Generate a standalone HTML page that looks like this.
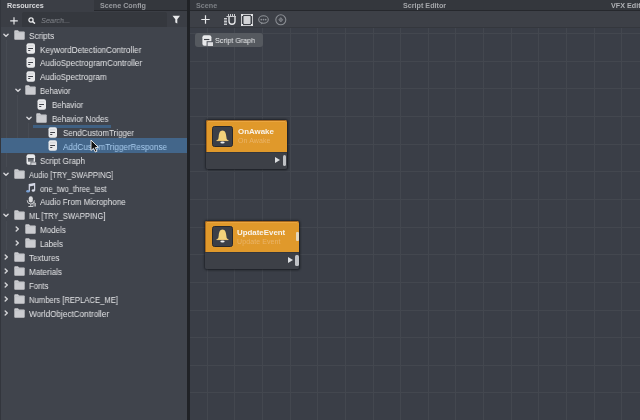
<!DOCTYPE html>
<html><head><meta charset="utf-8"><style>
*{margin:0;padding:0;box-sizing:border-box}
html,body{width:640px;height:420px;overflow:hidden;background:#40444c;font-family:"Liberation Sans",sans-serif}
#left{position:absolute;left:0;top:0;width:187px;height:420px;background:#40444c}
.tabbar{position:absolute;top:0;height:10.5px;background:#34373d;border-bottom:1px solid #26282d}
.tab{position:absolute;top:1.6px;height:10px;font-size:7.2px;font-weight:bold;line-height:8px;color:#8e9096;white-space:nowrap;will-change:transform}
.ic{position:absolute}
.lbl{position:absolute;font-size:8.6px;line-height:11px;color:#e4e5e7;white-space:nowrap;transform-origin:0 50%;will-change:transform}
.lbl.sl{color:#a9cdf0}
.guide{position:absolute;width:1px;background:#474b53}
.sel{position:absolute;left:0;width:187px;height:15px;background:#43668a}
.drop{position:absolute;width:78px;height:2.7px;background:#3f6082}
#sep{position:absolute;left:187px;top:0;width:3px;height:420px;background:#202226}
#right{position:absolute;left:190px;top:0;width:450px;height:420px;background:#3a3e47;overflow:hidden}
#graph{position:absolute;left:0;top:27.5px;width:450px;height:393px;background:#3a3e47;overflow:hidden}
.gv{position:absolute;top:0;width:1px;height:393px;background:#43474f}
.gh{position:absolute;left:0;height:1px;width:450px;background:#43474f}
.crumb{position:absolute;left:5px;top:5.6px;width:67.5px;height:14.2px;background:#55595f;border-radius:3px}
.node{position:absolute;box-shadow:0 0 2px 1px rgba(20,22,26,0.6), 1px 1px 2px rgba(20,22,26,0.4);border-radius:2px}
.nh{position:relative;background:#e0992b;border-radius:2.5px 2.5px 0 0;box-shadow:inset 0 1px 0 #a5671c, inset 1px 0 0 #a5671c, inset 0 2px 0 #eba640}
.nb{position:relative;background:#3d4047;border-radius:0 0 2px 2px;border-top:1px solid #34373d}
.nicon{position:absolute;left:6.2px;top:6.2px;width:21.4px;height:21px;background:#3b3f48;border:1.2px solid #26282d;border-radius:2.5px;display:flex;align-items:center;justify-content:center}
.nt{position:absolute;left:32px;top:7px;font-size:7.9px;font-weight:bold;color:#f8f3ea;white-space:nowrap;will-change:transform}
.ns{position:absolute;left:32px;top:17.2px;font-size:7px;color:#eab468;white-space:nowrap;letter-spacing:0.1px;will-change:transform}
.tri{position:absolute;right:6.5px;top:4.4px;width:0;height:0;border-left:5.5px solid #dcdde0;border-top:3.5px solid transparent;border-bottom:3.5px solid transparent}
.bar{position:absolute;right:0.6px;top:2.2px;width:3.6px;height:11px;background:#bfc1c5;border-radius:1.5px}
</style></head><body>
<div id="left">
 <div class="tabbar" style="left:0;width:187px"></div>
 <div style="position:absolute;left:0;top:0;width:1px;height:420px;background:#33363d;z-index:5"></div>
 <div style="position:absolute;left:0;top:0;width:93.8px;height:11.5px;background:#3b3e45"></div>
 <div class="tab" style="left:7px;top:2px;color:#d9dadd">Resources</div>
 <div class="tab" style="left:100px;color:#9a9ca1">Scene Config</div>
 <div style="position:absolute;left:0;top:10.5px;width:187px;height:16.5px;background:#3b3e45"></div>
 <div style="position:absolute;left:22px;top:12px;width:145px;height:15px;background:#35383e;border-radius:2px 2px 0 0"></div>
 <svg class="ic" style="left:9.5px;top:16.6px" width="9" height="9" viewBox="0 0 9 9"><path d="M4 0.2 V7.4 M0.2 3.8 H7.8" stroke="#e8e9eb" stroke-width="1.15"/></svg>
 <svg class="ic" style="left:28px;top:16.5px" width="8" height="7" viewBox="0 0 8 7"><circle cx="3" cy="3" r="2.1" fill="none" stroke="#e8e9eb" stroke-width="1.3"/><path d="M4.6 4.6 L7 6.6" stroke="#e8e9eb" stroke-width="1.4"/></svg>
 <div class="lbl" style="left:41px;top:14.5px;color:#85888e;font-style:italic;font-size:7.4px;transform:scaleX(0.98);transform-origin:0 50%;will-change:transform">Search...</div>
 <svg class="ic" style="left:172px;top:14.5px" width="9" height="9" viewBox="0 0 9 9"><path d="M0.5 0.8 H8 L5.3 4.3 V8.5 L3.3 7.5 V4.3 Z" fill="#e8e9eb"/></svg>
<div class="guide" style="left:6px;top:39.8px;height:127.1px"></div>
<div class="guide" style="left:17px;top:95.4px;height:57.6px"></div>
<div class="guide" style="left:28px;top:123.2px;height:29.8px"></div>
<div class="guide" style="left:6px;top:178.8px;height:29.8px"></div>
<div class="guide" style="left:6px;top:220.5px;height:29.8px"></div>
<svg class="ic" style="left:3.4px;top:32.599999999999994px" width="6" height="5" viewBox="0 0 6 5"><path d="M0.9 1.2 L3 3.3 L5.1 1.2" fill="none" stroke="#d4d5d8" stroke-width="1.4" stroke-linecap="round" stroke-linejoin="round"/></svg>
<svg class="ic" style="left:14px;top:30px" width="11" height="10" viewBox="0 0 11 10"><path d="M0.3 1.1 Q0.3 0.3 1.1 0.3 H4 L5 1.4 H9.9 Q10.7 1.4 10.7 2.2 V9 Q10.7 9.7 9.9 9.7 H1.1 Q0.3 9.7 0.3 9 Z" fill="#cbccd0"/><path d="M0.3 2.6 H10.7" stroke="#b9babe" stroke-width="0.5"/></svg>
<div class="lbl" style="left:29.3px;top:30.60px;transform:scaleX(0.9610)">Scripts</div>
<svg class="ic" style="left:26.1px;top:43px" width="10" height="11" viewBox="0 0 10 11"><rect x="0.5" y="0.3" width="8.5" height="10.5" rx="2" fill="#e8e9eb"/><path d="M2 2.8 H7.5" stroke="#c9cace" stroke-width="0.7"/><path d="M2.2 5.5 H7 M2.2 7.5 H4.3" stroke="#3f4249" stroke-width="1"/></svg>
<div class="lbl" style="left:40.4px;top:44.50px;transform:scaleX(0.9467)">KeywordDetectionController</div>
<svg class="ic" style="left:26.1px;top:57px" width="10" height="11" viewBox="0 0 10 11"><rect x="0.5" y="0.3" width="8.5" height="10.5" rx="2" fill="#e8e9eb"/><path d="M2 2.8 H7.5" stroke="#c9cace" stroke-width="0.7"/><path d="M2.2 5.5 H7 M2.2 7.5 H4.3" stroke="#3f4249" stroke-width="1"/></svg>
<div class="lbl" style="left:40.4px;top:58.40px;transform:scaleX(0.9411)">AudioSpectrogramController</div>
<svg class="ic" style="left:26.1px;top:71px" width="10" height="11" viewBox="0 0 10 11"><rect x="0.5" y="0.3" width="8.5" height="10.5" rx="2" fill="#e8e9eb"/><path d="M2 2.8 H7.5" stroke="#c9cace" stroke-width="0.7"/><path d="M2.2 5.5 H7 M2.2 7.5 H4.3" stroke="#3f4249" stroke-width="1"/></svg>
<div class="lbl" style="left:40.4px;top:72.30px;transform:scaleX(0.9357)">AudioSpectrogram</div>
<svg class="ic" style="left:14.5px;top:88.2px" width="6" height="5" viewBox="0 0 6 5"><path d="M0.9 1.2 L3 3.3 L5.1 1.2" fill="none" stroke="#d4d5d8" stroke-width="1.4" stroke-linecap="round" stroke-linejoin="round"/></svg>
<svg class="ic" style="left:25px;top:85px" width="11" height="10" viewBox="0 0 11 10"><path d="M0.3 1.1 Q0.3 0.3 1.1 0.3 H4 L5 1.4 H9.9 Q10.7 1.4 10.7 2.2 V9 Q10.7 9.7 9.9 9.7 H1.1 Q0.3 9.7 0.3 9 Z" fill="#cbccd0"/><path d="M0.3 2.6 H10.7" stroke="#b9babe" stroke-width="0.5"/></svg>
<div class="lbl" style="left:40.4px;top:86.20px;transform:scaleX(0.8982)">Behavior</div>
<svg class="ic" style="left:37.2px;top:99px" width="10" height="11" viewBox="0 0 10 11"><rect x="0.5" y="0.3" width="8.5" height="10.5" rx="2" fill="#e8e9eb"/><path d="M2 2.8 H7.5" stroke="#c9cace" stroke-width="0.7"/><path d="M2.2 5.5 H7 M2.2 7.5 H4.3" stroke="#3f4249" stroke-width="1"/></svg>
<div class="lbl" style="left:51.5px;top:100.10px;transform:scaleX(0.9190)">Behavior</div>
<svg class="ic" style="left:25.599999999999998px;top:116.0px" width="6" height="5" viewBox="0 0 6 5"><path d="M0.9 1.2 L3 3.3 L5.1 1.2" fill="none" stroke="#d4d5d8" stroke-width="1.4" stroke-linecap="round" stroke-linejoin="round"/></svg>
<svg class="ic" style="left:36px;top:113px" width="11" height="10" viewBox="0 0 11 10"><path d="M0.3 1.1 Q0.3 0.3 1.1 0.3 H4 L5 1.4 H9.9 Q10.7 1.4 10.7 2.2 V9 Q10.7 9.7 9.9 9.7 H1.1 Q0.3 9.7 0.3 9 Z" fill="#cbccd0"/><path d="M0.3 2.6 H10.7" stroke="#b9babe" stroke-width="0.5"/></svg>
<div class="lbl" style="left:51.5px;top:114.00px;transform:scaleX(0.9235)">Behavior Nodes</div>
<div class="drop" style="top:125.20px;left:32.8px"></div>
<svg class="ic" style="left:48.3px;top:127px" width="10" height="11" viewBox="0 0 10 11"><rect x="0.5" y="0.3" width="8.5" height="10.5" rx="2" fill="#e8e9eb"/><path d="M2 2.8 H7.5" stroke="#c9cace" stroke-width="0.7"/><path d="M2.2 5.5 H7 M2.2 7.5 H4.3" stroke="#3f4249" stroke-width="1"/></svg>
<div class="lbl" style="left:62.599999999999994px;top:127.90px;transform:scaleX(0.9274)">SendCustomTrigger</div>
<div class="sel" style="top:138.00px"></div>
<svg class="ic" style="left:48.3px;top:140px" width="10" height="11" viewBox="0 0 10 11"><rect x="0.5" y="0.3" width="8.5" height="10.5" rx="2" fill="#e8e9eb"/><path d="M2 2.8 H7.5" stroke="#c9cace" stroke-width="0.7"/><path d="M2.2 5.5 H7 M2.2 7.5 H4.3" stroke="#3f4249" stroke-width="1"/></svg>
<div class="lbl sl" style="left:62.599999999999994px;top:141.80px;transform:scaleX(0.9409)">AddCustomTriggerResponse</div>
<svg class="ic" style="left:26.1px;top:154px" width="11" height="11" viewBox="0 0 11 11"><rect x="0.5" y="0.3" width="8.6" height="10.5" rx="2" fill="#e8e9eb"/><rect x="2" y="4.4" width="5.6" height="3.3" fill="#6c6f75"/><rect x="1.8" y="4.2" width="6" height="1" fill="#3f4249"/><rect x="4.6" y="7.8" width="6" height="3.2" fill="#40444c"/><rect x="5.2" y="8.3" width="5" height="2.7" fill="#c7c8cc"/></svg>
<div class="lbl" style="left:40.4px;top:155.70px;transform:scaleX(0.9301)">Script Graph</div>
<svg class="ic" style="left:3.4px;top:171.60000000000002px" width="6" height="5" viewBox="0 0 6 5"><path d="M0.9 1.2 L3 3.3 L5.1 1.2" fill="none" stroke="#d4d5d8" stroke-width="1.4" stroke-linecap="round" stroke-linejoin="round"/></svg>
<svg class="ic" style="left:14px;top:169px" width="11" height="10" viewBox="0 0 11 10"><path d="M0.3 1.1 Q0.3 0.3 1.1 0.3 H4 L5 1.4 H9.9 Q10.7 1.4 10.7 2.2 V9 Q10.7 9.7 9.9 9.7 H1.1 Q0.3 9.7 0.3 9 Z" fill="#cbccd0"/><path d="M0.3 2.6 H10.7" stroke="#b9babe" stroke-width="0.5"/></svg>
<div class="lbl" style="left:29.3px;top:169.60px;transform:scaleX(0.8701)">Audio [TRY_SWAPPING]</div>
<svg class="ic" style="left:26.299999999999997px;top:183.39999999999998px" width="10" height="10" viewBox="0 0 10 10"><path d="M3.3 8.2 V1.6 L8.6 0.6 V7.4" fill="none" stroke="#d6d9e6" stroke-width="1.2"/><path d="M3.3 1.6 L8.6 0.6 V2.6 L3.3 3.6 Z" fill="#d6d9e6"/><ellipse cx="2" cy="8.3" rx="1.8" ry="1.3" fill="#7aa2d6"/><ellipse cx="7.3" cy="7.5" rx="1.6" ry="1.3" fill="#d6d9e6"/></svg>
<div class="lbl" style="left:40.4px;top:183.50px;transform:scaleX(0.8823)">one_two_three_test</div>
<svg class="ic" style="left:26.1px;top:196.3px" width="10" height="11" viewBox="0 0 10 11"><rect x="2.8" y="0.3" width="4" height="6.2" rx="2" fill="#dadbde"/><path d="M1.2 4.3 Q1.2 8 4.8 8 Q8.4 8 8.4 4.3 M4.8 8 V10.5 M2.4 10.5 H7.2" fill="none" stroke="#dadbde" stroke-width="0.9"/><path d="M7 6.5 V10.5 M8.3 5.8 V10.5 M9.5 7 V10.5" stroke="#c5c6ca" stroke-width="0.8"/></svg>
<div class="lbl" style="left:40.4px;top:197.40px;transform:scaleX(0.9344)">Audio From Microphone</div>
<svg class="ic" style="left:3.4px;top:213.3px" width="6" height="5" viewBox="0 0 6 5"><path d="M0.9 1.2 L3 3.3 L5.1 1.2" fill="none" stroke="#d4d5d8" stroke-width="1.4" stroke-linecap="round" stroke-linejoin="round"/></svg>
<svg class="ic" style="left:14px;top:210px" width="11" height="10" viewBox="0 0 11 10"><path d="M0.3 1.1 Q0.3 0.3 1.1 0.3 H4 L5 1.4 H9.9 Q10.7 1.4 10.7 2.2 V9 Q10.7 9.7 9.9 9.7 H1.1 Q0.3 9.7 0.3 9 Z" fill="#cbccd0"/><path d="M0.3 2.6 H10.7" stroke="#b9babe" stroke-width="0.5"/></svg>
<div class="lbl" style="left:29.3px;top:211.30px;transform:scaleX(0.8835)">ML [TRY_SWAPPING]</div>
<svg class="ic" style="left:15.3px;top:226.09999999999997px" width="5" height="6" viewBox="0 0 5 6"><path d="M1.2 0.9 L3.3 3 L1.2 5.1" fill="none" stroke="#d4d5d8" stroke-width="1.4" stroke-linecap="round" stroke-linejoin="round"/></svg>
<svg class="ic" style="left:25px;top:224px" width="11" height="10" viewBox="0 0 11 10"><path d="M0.3 1.1 Q0.3 0.3 1.1 0.3 H4 L5 1.4 H9.9 Q10.7 1.4 10.7 2.2 V9 Q10.7 9.7 9.9 9.7 H1.1 Q0.3 9.7 0.3 9 Z" fill="#cbccd0"/><path d="M0.3 2.6 H10.7" stroke="#b9babe" stroke-width="0.5"/></svg>
<div class="lbl" style="left:40.4px;top:225.20px;transform:scaleX(0.9300)">Models</div>
<svg class="ic" style="left:15.3px;top:240.0px" width="5" height="6" viewBox="0 0 5 6"><path d="M1.2 0.9 L3.3 3 L1.2 5.1" fill="none" stroke="#d4d5d8" stroke-width="1.4" stroke-linecap="round" stroke-linejoin="round"/></svg>
<svg class="ic" style="left:25px;top:238px" width="11" height="10" viewBox="0 0 11 10"><path d="M0.3 1.1 Q0.3 0.3 1.1 0.3 H4 L5 1.4 H9.9 Q10.7 1.4 10.7 2.2 V9 Q10.7 9.7 9.9 9.7 H1.1 Q0.3 9.7 0.3 9 Z" fill="#cbccd0"/><path d="M0.3 2.6 H10.7" stroke="#b9babe" stroke-width="0.5"/></svg>
<div class="lbl" style="left:40.4px;top:239.10px;transform:scaleX(0.9068)">Labels</div>
<svg class="ic" style="left:4.2px;top:253.89999999999998px" width="5" height="6" viewBox="0 0 5 6"><path d="M1.2 0.9 L3.3 3 L1.2 5.1" fill="none" stroke="#d4d5d8" stroke-width="1.4" stroke-linecap="round" stroke-linejoin="round"/></svg>
<svg class="ic" style="left:14px;top:252px" width="11" height="10" viewBox="0 0 11 10"><path d="M0.3 1.1 Q0.3 0.3 1.1 0.3 H4 L5 1.4 H9.9 Q10.7 1.4 10.7 2.2 V9 Q10.7 9.7 9.9 9.7 H1.1 Q0.3 9.7 0.3 9 Z" fill="#cbccd0"/><path d="M0.3 2.6 H10.7" stroke="#b9babe" stroke-width="0.5"/></svg>
<div class="lbl" style="left:29.3px;top:253.00px;transform:scaleX(0.9364)">Textures</div>
<svg class="ic" style="left:4.2px;top:267.8px" width="5" height="6" viewBox="0 0 5 6"><path d="M1.2 0.9 L3.3 3 L1.2 5.1" fill="none" stroke="#d4d5d8" stroke-width="1.4" stroke-linecap="round" stroke-linejoin="round"/></svg>
<svg class="ic" style="left:14px;top:266px" width="11" height="10" viewBox="0 0 11 10"><path d="M0.3 1.1 Q0.3 0.3 1.1 0.3 H4 L5 1.4 H9.9 Q10.7 1.4 10.7 2.2 V9 Q10.7 9.7 9.9 9.7 H1.1 Q0.3 9.7 0.3 9 Z" fill="#cbccd0"/><path d="M0.3 2.6 H10.7" stroke="#b9babe" stroke-width="0.5"/></svg>
<div class="lbl" style="left:29.3px;top:266.90px;transform:scaleX(0.9475)">Materials</div>
<svg class="ic" style="left:4.2px;top:281.7px" width="5" height="6" viewBox="0 0 5 6"><path d="M1.2 0.9 L3.3 3 L1.2 5.1" fill="none" stroke="#d4d5d8" stroke-width="1.4" stroke-linecap="round" stroke-linejoin="round"/></svg>
<svg class="ic" style="left:14px;top:280px" width="11" height="10" viewBox="0 0 11 10"><path d="M0.3 1.1 Q0.3 0.3 1.1 0.3 H4 L5 1.4 H9.9 Q10.7 1.4 10.7 2.2 V9 Q10.7 9.7 9.9 9.7 H1.1 Q0.3 9.7 0.3 9 Z" fill="#cbccd0"/><path d="M0.3 2.6 H10.7" stroke="#b9babe" stroke-width="0.5"/></svg>
<div class="lbl" style="left:29.3px;top:280.80px;transform:scaleX(0.9023)">Fonts</div>
<svg class="ic" style="left:4.2px;top:295.6px" width="5" height="6" viewBox="0 0 5 6"><path d="M1.2 0.9 L3.3 3 L1.2 5.1" fill="none" stroke="#d4d5d8" stroke-width="1.4" stroke-linecap="round" stroke-linejoin="round"/></svg>
<svg class="ic" style="left:14px;top:294px" width="11" height="10" viewBox="0 0 11 10"><path d="M0.3 1.1 Q0.3 0.3 1.1 0.3 H4 L5 1.4 H9.9 Q10.7 1.4 10.7 2.2 V9 Q10.7 9.7 9.9 9.7 H1.1 Q0.3 9.7 0.3 9 Z" fill="#cbccd0"/><path d="M0.3 2.6 H10.7" stroke="#b9babe" stroke-width="0.5"/></svg>
<div class="lbl" style="left:29.3px;top:294.70px;transform:scaleX(0.8917)">Numbers [REPLACE_ME]</div>
<svg class="ic" style="left:4.2px;top:309.5px" width="5" height="6" viewBox="0 0 5 6"><path d="M1.2 0.9 L3.3 3 L1.2 5.1" fill="none" stroke="#d4d5d8" stroke-width="1.4" stroke-linecap="round" stroke-linejoin="round"/></svg>
<svg class="ic" style="left:14px;top:308px" width="11" height="10" viewBox="0 0 11 10"><path d="M0.3 1.1 Q0.3 0.3 1.1 0.3 H4 L5 1.4 H9.9 Q10.7 1.4 10.7 2.2 V9 Q10.7 9.7 9.9 9.7 H1.1 Q0.3 9.7 0.3 9 Z" fill="#cbccd0"/><path d="M0.3 2.6 H10.7" stroke="#b9babe" stroke-width="0.5"/></svg>
<div class="lbl" style="left:29.3px;top:308.60px;transform:scaleX(0.9488)">WorldObjectController</div>
 <svg class="ic" style="left:90px;top:139px" width="9" height="14" viewBox="0 0 9 14"><path d="M1 1 V11.5 L3.5 9.3 L5.3 13 L7 12.2 L5.3 8.6 L8.3 8.3 Z" fill="#111" stroke="#f0f0f0" stroke-width="0.9" stroke-linejoin="round"/></svg>
</div>
<div id="sep"></div>
<div id="right">
 <div class="tabbar" style="left:0;width:450px"></div>
 <div class="tab" style="left:6px;color:#7d8086">Scene</div>
 <div class="tab" style="left:213px;color:#a3a5a9">Script Editor</div>
 <div class="tab" style="left:421px;color:#aeb0b4">VFX Editor</div>
 <div style="position:absolute;left:0;top:10.5px;width:450px;height:17px;background:#3d4047;border-bottom:1px solid #34373d"></div>
 <svg class="ic" style="left:11px;top:15px" width="9" height="9" viewBox="0 0 9 9"><path d="M4.5 0.3 V8.7 M0.3 4.5 H8.7" stroke="#e8e9eb" stroke-width="1.2"/></svg>
 <svg class="ic" style="left:34px;top:14px" width="12" height="12" viewBox="0 0 12 12"><path d="M5 3 V7.3 Q5 10.3 8 10.3 Q11 10.3 11 7.3 V3" fill="none" stroke="#e2e3e6" stroke-width="1.4"/><path d="M4.5 0 V2 M6.5 0 V2 M8.5 0 V2 M10.5 0 V2 M2.5 2.5 H12 M0 4.5 H3 M0 6 H3 M0 7.5 H3 M0 9 H3 M0 10.5 H3" stroke="#d8d9dc" stroke-width="0.9"/></svg>
 <svg class="ic" style="left:51px;top:14px" width="12" height="12" viewBox="0 0 12 12"><path d="M0 0.5 H12 M0 11.5 H12 M0.5 0 V12 M11.5 0 V12" stroke="#c6c7ca" stroke-width="1"/><path d="M0 0 H2 V2 H0 Z M10 0 H12 V2 H10 Z M0 10 H2 V12 H0 Z M10 10 H12 V12 H10 Z" fill="#e0e1e4"/><rect x="2.5" y="2" width="7" height="8" rx="0.8" fill="#d2d3d6"/></svg>
 <svg class="ic" style="left:68px;top:14.5px" width="11" height="10" viewBox="0 0 11 10"><ellipse cx="5.5" cy="4.5" rx="4.8" ry="3.7" fill="none" stroke="#8d9096" stroke-width="1.1"/><circle cx="3.3" cy="4.6" r="0.85" fill="#8d9096"/><circle cx="5.5" cy="4.6" r="0.85" fill="#8d9096"/><circle cx="7.7" cy="4.6" r="0.85" fill="#8d9096"/><path d="M3.2 7.6 L2.8 9.5 L5.2 8.1" fill="#8d9096"/></svg>
 <svg class="ic" style="left:84.5px;top:13.7px" width="12" height="12" viewBox="0 0 12 12"><circle cx="5.8" cy="5.8" r="5" fill="none" stroke="#8a8d93" stroke-width="1.1"/><path d="M5.8 3.6 L7.8 5.8 L5.8 8 L3.8 5.8 Z" fill="#6f7278" stroke="#8a8d93" stroke-width="0.7"/></svg>
 <div id="graph">
<div class="gv" style="left:16.60px"></div>
<div class="gv" style="left:44.25px"></div>
<div class="gv" style="left:71.90px"></div>
<div class="gv" style="left:99.55px"></div>
<div class="gv" style="left:127.20px"></div>
<div class="gv" style="left:154.85px"></div>
<div class="gv" style="left:182.50px"></div>
<div class="gv" style="left:210.15px"></div>
<div class="gv" style="left:237.80px"></div>
<div class="gv" style="left:265.45px"></div>
<div class="gv" style="left:293.10px"></div>
<div class="gv" style="left:320.75px"></div>
<div class="gv" style="left:348.40px"></div>
<div class="gv" style="left:376.05px"></div>
<div class="gv" style="left:403.70px"></div>
<div class="gv" style="left:431.35px"></div>
<div class="gh" style="top:5.50px"></div>
<div class="gh" style="top:33.15px"></div>
<div class="gh" style="top:60.80px"></div>
<div class="gh" style="top:88.45px"></div>
<div class="gh" style="top:116.10px"></div>
<div class="gh" style="top:143.75px"></div>
<div class="gh" style="top:171.40px"></div>
<div class="gh" style="top:199.05px"></div>
<div class="gh" style="top:226.70px"></div>
<div class="gh" style="top:254.35px"></div>
<div class="gh" style="top:282.00px"></div>
<div class="gh" style="top:309.65px"></div>
<div class="gh" style="top:337.30px"></div>
<div class="gh" style="top:364.95px"></div>
  <div class="crumb"></div>
  <svg class="ic" style="left:11.7px;top:7.3px" width="11" height="11" viewBox="0 0 11 11"><rect x="0.4" y="0.3" width="9" height="10.4" rx="2" fill="#e8e9eb"/><path d="M2 4.5 H7.4" stroke="#3f4249" stroke-width="1.1"/><rect x="4.6" y="6.2" width="6.4" height="4.8" fill="#50545c"/><rect x="5.6" y="7.2" width="5.4" height="3.8" fill="#dcdde0"/></svg>
  <div class="lbl" style="left:25.3px;top:7.6px;color:#eeeff1;font-size:7.3px;transform:scaleX(0.98);transform-origin:0 50%;will-change:transform">Script Graph</div>
  <div class="node" style="left:15.8px;top:92.4px;width:81.2px">
<div class="nh" style="height:32px"><div class="nicon" style="top:6.2px"><svg width="15" height="16" viewBox="0 0 15 16"><path d="M7.5 1.6 C10.2 1.6 11 4.6 11.3 7.4 L11.7 10 L13.6 11.9 H1.4 L3.3 10 L3.7 7.4 C4 4.6 4.8 1.6 7.5 1.6 Z" fill="#f3d27a"/><path d="M1.6 11.6 H13.4" stroke="#e6bf72" stroke-width="0.8"/><ellipse cx="7.5" cy="13.6" rx="2.2" ry="1" fill="#eef0f2"/></svg></div><div class="nt">OnAwake</div><div class="ns">On Awake</div></div>
<div class="nb" style="height:17.5px"><div class="tri"></div><div class="bar"></div></div>
</div>
  <div class="node" style="left:15.4px;top:193.2px;width:94px">
<div class="nh" style="height:31.3px"><div class="nicon" style="top:5.2px"><svg width="15" height="16" viewBox="0 0 15 16"><path d="M7.5 1.6 C10.2 1.6 11 4.6 11.3 7.4 L11.7 10 L13.6 11.9 H1.4 L3.3 10 L3.7 7.4 C4 4.6 4.8 1.6 7.5 1.6 Z" fill="#f3d27a"/><path d="M1.6 11.6 H13.4" stroke="#e6bf72" stroke-width="0.8"/><ellipse cx="7.5" cy="13.6" rx="2.2" ry="1" fill="#eef0f2"/></svg></div><div class="nt">UpdateEvent</div><div class="ns">Update Event</div><div style="position:absolute;right:0.3px;top:11.5px;width:3.2px;height:8.5px;background:#e3d6bd;border-radius:1px"></div></div>
<div class="nb" style="height:17px"><div class="tri"></div><div class="bar"></div></div>
</div>
 </div>
</div>
</body></html>
